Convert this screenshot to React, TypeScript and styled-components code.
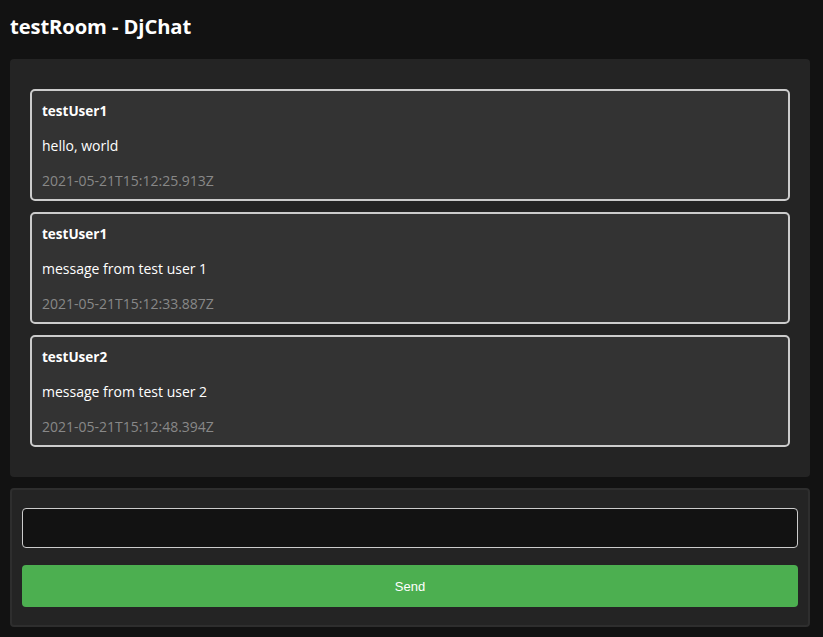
import React from 'react';
import styled, { createGlobalStyle } from 'styled-components';

const GlobalStyle = createGlobalStyle`
  html, body {
    margin: 0;
    padding: 0;
    background: #121212;
  }
  body {
    font-family: 'Open Sans', 'Noto Sans', sans-serif;
    color: #ffffff;
  }
`;

const Page = styled.div`
  padding: 10px 13px 10px 10px;
  display: flex;
  flex-direction: column;
`;

const Title = styled.h1`
  margin: 3px 0 20px;
  font-size: 20.2px;
  line-height: 26px;
  font-weight: 700;
  letter-spacing: -0.1px;
`;

const ChatPanel = styled.div`
  background: #242424;
  border-radius: 4px;
  padding: 30px 20px;
  display: flex;
  flex-direction: column;
  gap: 11px;
`;

const Message = styled.div`
  background: #333333;
  border: 2px solid #cccccc;
  border-radius: 5px;
  padding: 9px 10px 7px;
  display: flex;
  flex-direction: column;
  gap: 13px;
  font-size: 14px;
  line-height: 22px;
`;

const Author = styled.div`
  font-weight: 700;
  font-size: 13.5px;
`;

const Body = styled.div`
  color: #ffffff;
`;

const Stamp = styled.div`
  color: #888888;
`;

const Composer = styled.form`
  margin-top: 11px;
  background: #242424;
  border: 2px solid #2e2e2e;
  border-radius: 4px;
  padding: 18px 10px 18px;
  display: flex;
  flex-direction: column;
  gap: 17px;
`;

const Input = styled.input`
  height: 40px;
  box-sizing: border-box;
  background: #121212;
  border: 1px solid #cccccc;
  border-radius: 4px;
  color: #ffffff;
  padding: 0 10px;
  font-size: 14px;
  outline: none;
`;

const SendButton = styled.button`
  height: 42px;
  background: #4caf50;
  border: none;
  border-radius: 4px;
  color: #ffffff;
  font-family: 'Liberation Sans', Arial, sans-serif;
  font-size: 13px;
  cursor: pointer;
`;

const messages = [
  { user: 'testUser1', text: 'hello, world', time: '2021-05-21T15:12:25.913Z' },
  { user: 'testUser1', text: 'message from test user 1', time: '2021-05-21T15:12:33.887Z' },
  { user: 'testUser2', text: 'message from test user 2', time: '2021-05-21T15:12:48.394Z' },
];

export default function App() {
  return (
    <Page>
      <GlobalStyle />
      <Title>testRoom - DjChat</Title>
      <ChatPanel>
        {messages.map((m) => (
          <Message key={m.time}>
            <Author>{m.user}</Author>
            <Body>{m.text}</Body>
            <Stamp>{m.time}</Stamp>
          </Message>
        ))}
      </ChatPanel>
      <Composer onSubmit={(e) => e.preventDefault()}>
        <Input type="text" />
        <SendButton type="submit">Send</SendButton>
      </Composer>
    </Page>
  );
}
